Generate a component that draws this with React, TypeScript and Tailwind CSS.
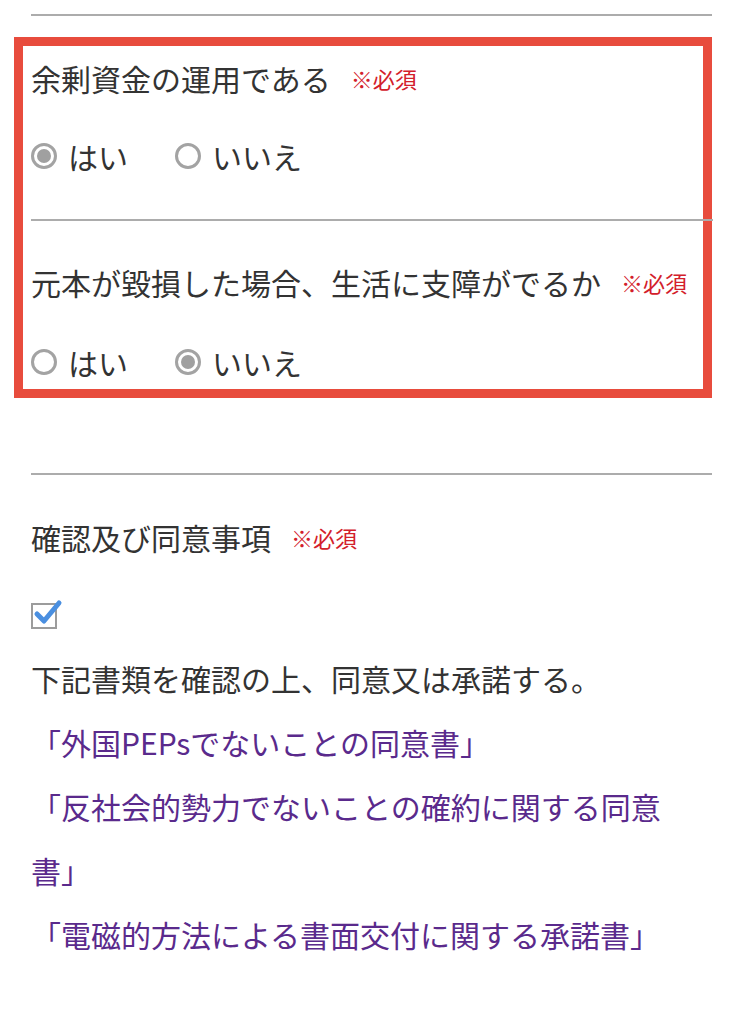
import React from "react";

const font = { fontFamily: '"Noto Sans CJK JP", "Noto Sans", sans-serif' };

function Radio({ checked, label }: { checked: boolean; label: string }) {
  return (
    <div className="flex items-center gap-[11px]">
      <span className="flex h-[26px] w-[26px] items-center justify-center rounded-full border-[3px] border-[#a3a3a3] bg-white">
        {checked && <span className="h-[14px] w-[14px] rounded-full bg-[#a0a0a0]" />}
      </span>
      <span>{label}</span>
    </div>
  );
}

function Required() {
  return <span className="ml-[20px] text-[22px] text-[#d3202b]">※必須</span>;
}

export default function App() {
  return (
    <div
      className="relative min-h-[1024px] w-[743px] bg-white pt-[14px] text-[30px] text-[#333333] [text-spacing-trim:space-all]"
      style={font}
    >
      <div className="pointer-events-none absolute left-[14px] top-[37px] h-[361px] w-[698px] border-[9px] border-[#e84c3d]" />
      <div className="px-[31px]">
        <div className="border-t-2 border-[#acacac]" />

        <div className="mt-[42px] flex h-[40px] items-center leading-[40px]">
          <span>余剰資金の運用である</span>
          <Required />
        </div>
        <div className="mt-[38px] flex h-[40px] items-center gap-[47px] leading-[40px]">
          <Radio checked label="はい" />
          <Radio checked={false} label="いいえ" />
        </div>
        <div className="relative z-10 mt-[43px] mr-[-1px] border-t-2 border-[#acacac]" />

        <div className="mt-[41px] flex h-[40px] items-center leading-[40px]">
          <span>元本が毀損した場合、生活に支障がでるか</span>
          <Required />
        </div>
        <div className="mt-[40px] flex h-[40px] items-center gap-[47px] leading-[40px]">
          <Radio checked={false} label="はい" />
          <Radio checked label="いいえ" />
        </div>

        <div className="mt-[91px] border-t-2 border-[#acacac]" />

        <div className="mt-[42px] flex h-[40px] items-center leading-[40px]">
          <span>確認及び同意事項</span>
          <Required />
        </div>

        <div className="relative mt-[46px] h-[26px] w-[26px]">
          <div className="h-[26px] w-[26px] border-2 border-[#9c9c9c] bg-white" />
          <svg className="absolute left-[2px] top-[-4px]" width="30" height="28" viewBox="0 0 30 28">
            <path d="M4 15 L11 22 L26 4" fill="none" stroke="#4a8fe0" strokeWidth="5" strokeLinecap="round" strokeLinejoin="round" />
          </svg>
        </div>

        <div className="mt-[17px] leading-[64px]">下記書類を確認の上、同意又は承諾する。</div>
        <div className="leading-[64px] text-[#5a2a8c]">
          <div>「外国PEPsでないことの同意書」</div>
          <div>「反社会的勢力でないことの確約に関する同意書」</div>
          <div>「電磁的方法による書面交付に関する承諾書」</div>
        </div>
      </div>
    </div>
  );
}
